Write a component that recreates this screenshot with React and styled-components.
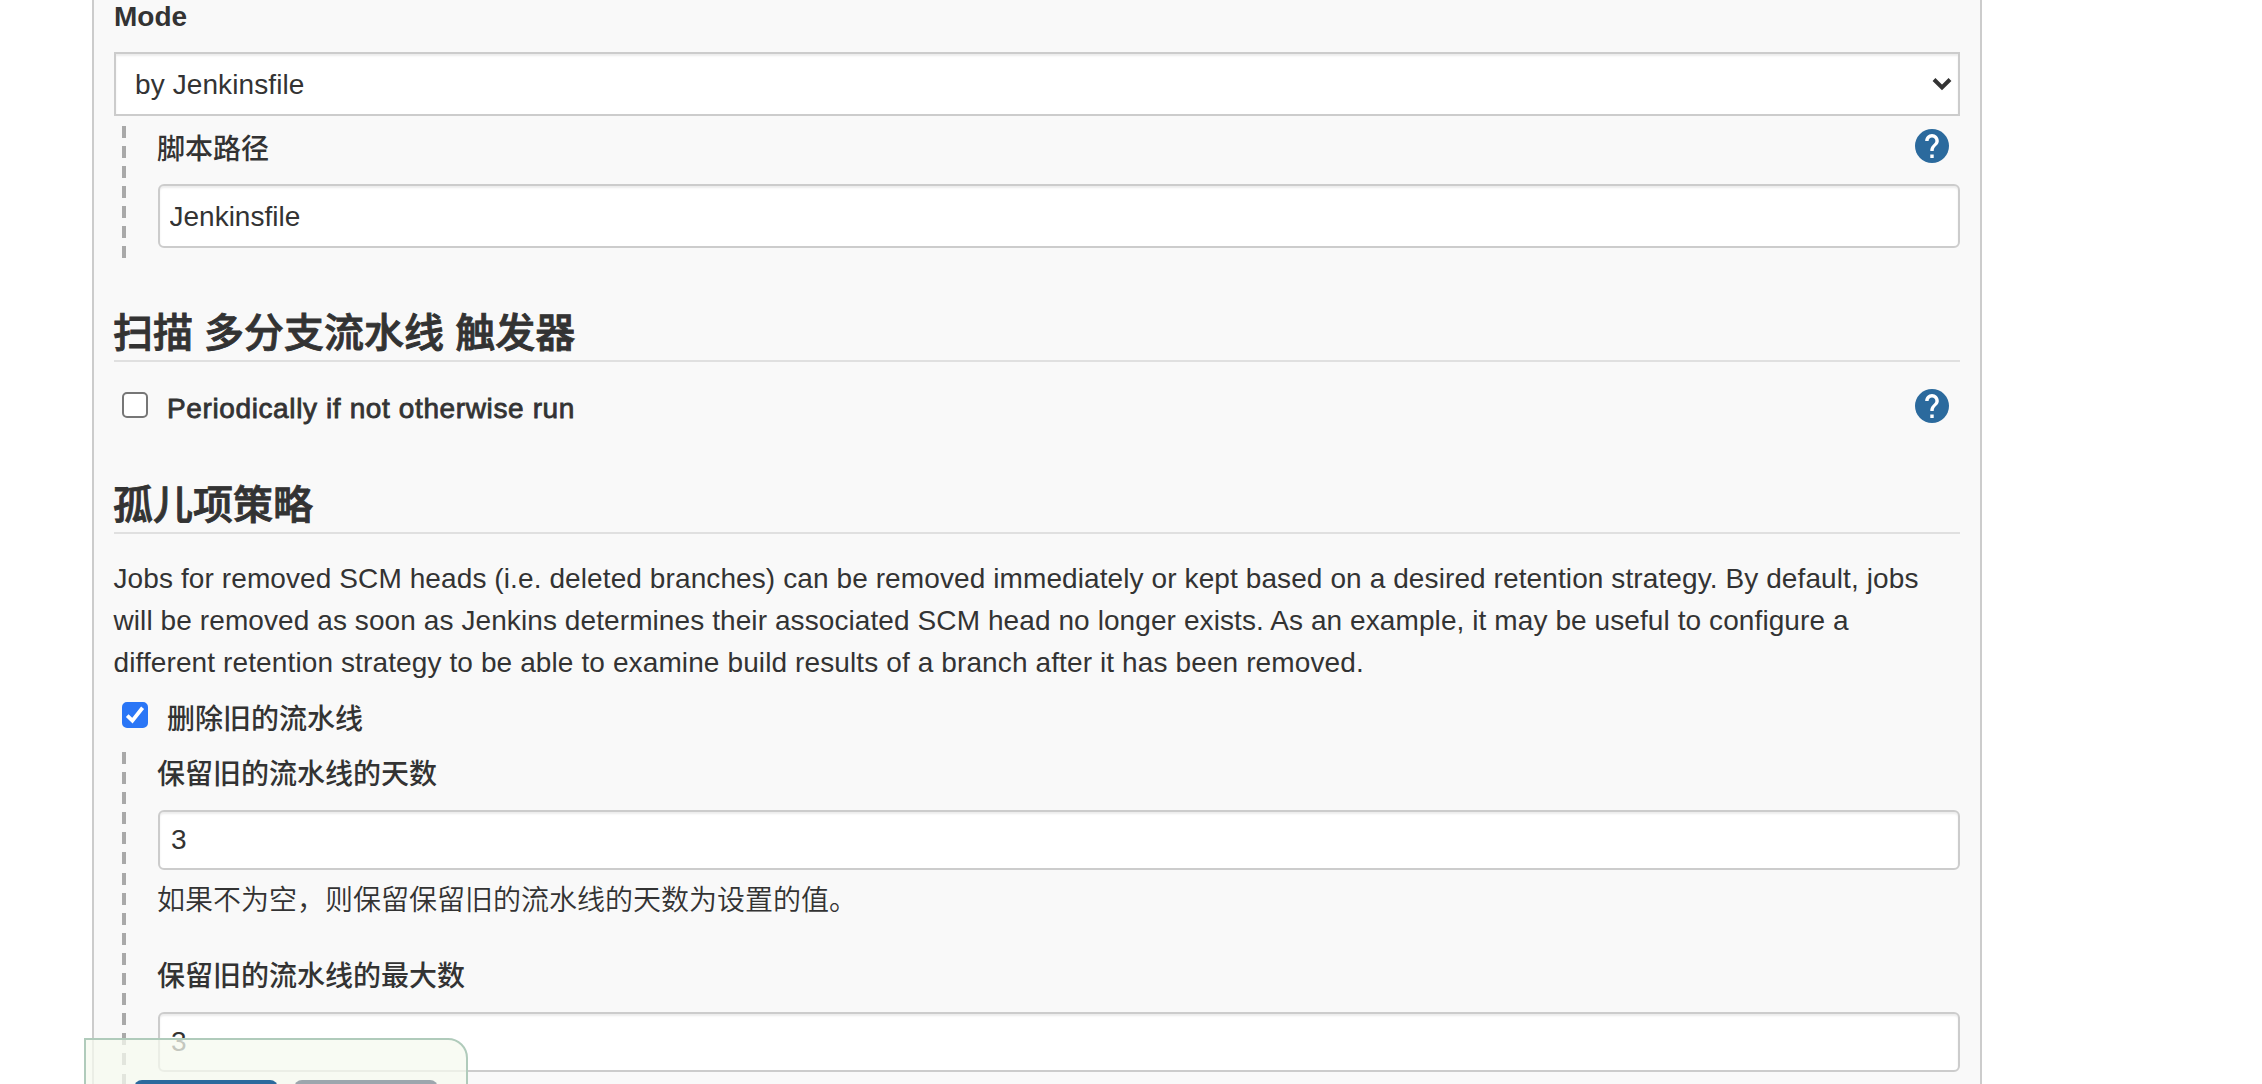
import React from 'react';
import styled, { createGlobalStyle, css } from 'styled-components';

const GlobalStyle = createGlobalStyle`
  * {
    box-sizing: border-box;
  }

  body {
    margin: 0;
    overflow: hidden;
    background: #fff;
    color: #333;
    font-family: 'Liberation Sans', 'Noto Sans CJK SC', sans-serif;
    font-size: 28px;
    line-height: 42px;
  }
`;

const Page = styled.div`
  height: 1084px;
  overflow: hidden;
`;

const ConfigPanel = styled.main`
  display: flex;
  flex-direction: column;
  width: 1890px;
  height: 1084px;
  margin-left: 92px;
  padding: 0 20px;
  overflow: hidden;
  border: solid #ccc;
  border-width: 0 2px;
  background: #f9f9f9;

  & > * {
    flex-shrink: 0;
  }
`;

const mediumText = css`
  font-weight: 500;
  -webkit-text-stroke: ${({ $latin }) => ($latin ? '0.8px #333' : '0')};
`;

const ModeLabel = styled.div`
  height: 52px;
  padding-top: 1px;
  font-weight: 700;
  line-height: 32px;
`;

const FieldLabel = styled.div`
  ${mediumText}
  height: ${({ $height }) => $height}px;
  margin-left: -1px;
  padding-top: ${({ $pad }) => $pad}px;
`;

const LabelRow = styled.div`
  display: flex;
  justify-content: space-between;
  padding-right: 11px;
`;

const SelectBox = styled.div`
  display: flex;
  align-items: center;
  justify-content: space-between;
  height: 64px;
  padding: 0 6px 0 19px;
  border: 2px solid #ccc;
  background: #fff;
  box-shadow: inset 0 2px 2px rgba(0, 0, 0, 0.075);
  letter-spacing: 0.1px;
`;

const SelectValue = styled.span`
  padding-top: 2px;
`;

const TextInput = styled.input`
  display: block;
  width: 100%;
  height: 60px;
  padding: 0 11px;
  border: 2px solid #ccc;
  border-radius: 6px;
  outline: none;
  background: #fff;
  box-shadow: inset 0 2px 2px rgba(0, 0, 0, 0.075);
  color: #333;
  font: inherit;
`;

const PathInput = styled(TextInput)`
  height: 64px;
  padding: 1px 9.5px 0;
`;

const NestedGroup = styled.div`
  height: ${({ $height }) => $height}px;
  margin: ${({ $top }) => $top}px 0 0 8px;
  padding-left: 36px;
  background: repeating-linear-gradient(
      to bottom,
      #a9a9a9 0 12px,
      transparent 12px ${({ $period }) => $period || 20}px
    )
    left top / 4px 100% no-repeat;
`;

const SectionTitle = styled.h2`
  height: 56px;
  margin: ${({ $top }) => $top}px 0 0;
  border-bottom: 2px solid #e0e0e0;
  font-size: 40px;
  font-weight: 500;
  line-height: 54px;
  text-indent: -1px;
  -webkit-text-stroke: 0.9px #333;
`;

const OptionRow = styled.div`
  display: flex;
  align-items: flex-start;
  height: 42px;
  margin-top: ${({ $top }) => $top}px;
  padding: 0 11px 0 8px;
`;

const OptionLabel = styled.label`
  ${mediumText}
  flex: 1;
  margin-left: 19px;
  padding-top: ${({ $latin }) => ($latin ? 1 : 2)}px;
  letter-spacing: ${({ $latin }) => ($latin ? 0.62 : 0)}px;
`;

const CheckMark = styled.span`
  display: flex;
  width: 26px;
  height: 26px;
  margin-top: 5px;
  border: 2px solid ${({ $checked }) => ($checked ? '#2a76f6' : '#767676')};
  border-radius: 5px;
  background: ${({ $checked }) => ($checked ? '#2a76f6' : '#fff')};
`;

const Description = styled.p`
  margin: 24px 0 0;
  white-space: nowrap;
`;

const DescriptionLine = styled.span`
  display: block;
  margin-left: -0.5px;
  letter-spacing: ${({ $spacing }) => $spacing}px;
`;

const Hint = styled.div`
  height: 76px;
  margin-left: -1px;
  padding-top: 10px;
  font-weight: 350;
`;

const HelpButton = styled.span`
  display: flex;
  width: 34px;
  height: 34px;
  margin-top: ${({ $top }) => $top}px;
`;

const StickyActions = styled.div`
  position: fixed;
  left: 84px;
  top: 1038px;
  display: flex;
  gap: 16px;
  width: 384px;
  height: 120px;
  padding: 40px 0 0 48px;
  border: 2px solid #b0cbbb;
  border-radius: 0 20px 0 0;
  background: rgba(245, 249, 239, 0.75);
`;

const ActionButton = styled.button`
  width: 144px;
  height: 64px;
  border: 0;
  border-radius: 8px;
  background: ${({ $primary }) => ($primary ? '#2b6a9d' : '#9ca6ad')};
`;

function HelpIcon({ top }) {
  return (
    <HelpButton $top={top}>
      <svg width="34" height="34" viewBox="2 2 20 20">
        <circle cx="12" cy="12" r="10" fill="#2b6a9d" />
        <path
          fill="#fff"
          d="M11 17h2v2h-2zM15.07 11.25l-.9.92C13.45 12.9 13 13.5 13 15h-2v-.5c0-1.1.45-2.1 1.17-2.83l1.24-1.26c.37-.36.59-.86.59-1.41 0-1.1-.9-2-2-2s-2 .9-2 2H8c0-2.21 1.79-4 4-4s4 1.79 4 4c0 .88-.36 1.68-.93 2.25z"
        />
      </svg>
    </HelpButton>
  );
}

function Checkbox({ checked = false }) {
  return (
    <CheckMark $checked={checked}>
      {checked && (
        <svg width="22" height="22" viewBox="0 0 22 22" fill="none" stroke="#fff" strokeWidth="3.8">
          <path d="M3.2 11.6 8.4 16.6 18.6 3.8" />
        </svg>
      )}
    </CheckMark>
  );
}

const DESCRIPTION = [
  {
    text: 'Jobs for removed SCM heads (i.e. deleted branches) can be removed immediately or kept based on a desired retention strategy. By default, jobs',
    spacing: 0.1,
  },
  {
    text: 'will be removed as soon as Jenkins determines their associated SCM head no longer exists. As an example, it may be useful to configure a',
    spacing: 0.09,
  },
  {
    text: 'different retention strategy to be able to examine build results of a branch after it has been removed.',
    spacing: 0.115,
  },
];

function App() {
  return (
    <Page>
      <GlobalStyle />
      <ConfigPanel>
        <ModeLabel>Mode</ModeLabel>
        <SelectBox>
          <SelectValue>by Jenkinsfile</SelectValue>
          <svg width="20" height="14" viewBox="0 0 20 14" fill="none" stroke="#333" strokeWidth="4">
            <path d="M2 2.5 10 10.5 18 2.5" />
          </svg>
        </SelectBox>
        <NestedGroup $top={10} $height={132}>
          <LabelRow>
            <FieldLabel $height={58} $pad={3}>
              脚本路径
            </FieldLabel>
            <HelpIcon top={3} />
          </LabelRow>
          <PathInput defaultValue="Jenkinsfile" />
        </NestedGroup>

        <SectionTitle $top={48}>扫描 多分支流水线 触发器</SectionTitle>
        <OptionRow $top={25}>
          <Checkbox />
          <OptionLabel $latin>Periodically if not otherwise run</OptionLabel>
          <HelpIcon top={2} />
        </OptionRow>

        <SectionTitle $top={49}>孤儿项策略</SectionTitle>
        <Description>
          {DESCRIPTION.map(({ text, spacing }) => (
            <DescriptionLine key={text} $spacing={spacing}>
              {text}
            </DescriptionLine>
          ))}
        </Description>
        <OptionRow $top={13}>
          <Checkbox checked />
          <OptionLabel>删除旧的流水线</OptionLabel>
        </OptionRow>
        <NestedGroup $top={13} $height={332} $period={20.1}>
          <FieldLabel $height={58} $pad={2}>
            保留旧的流水线的天数
          </FieldLabel>
          <TextInput defaultValue="3" />
          <Hint>如果不为空，则保留保留旧的流水线的天数为设置的值。</Hint>
          <FieldLabel $height={66} $pad={10}>
            保留旧的流水线的最大数
          </FieldLabel>
          <TextInput defaultValue="3" />
        </NestedGroup>
      </ConfigPanel>
      <StickyActions>
        <ActionButton $primary />
        <ActionButton />
      </StickyActions>
    </Page>
  );
}

export default App;
